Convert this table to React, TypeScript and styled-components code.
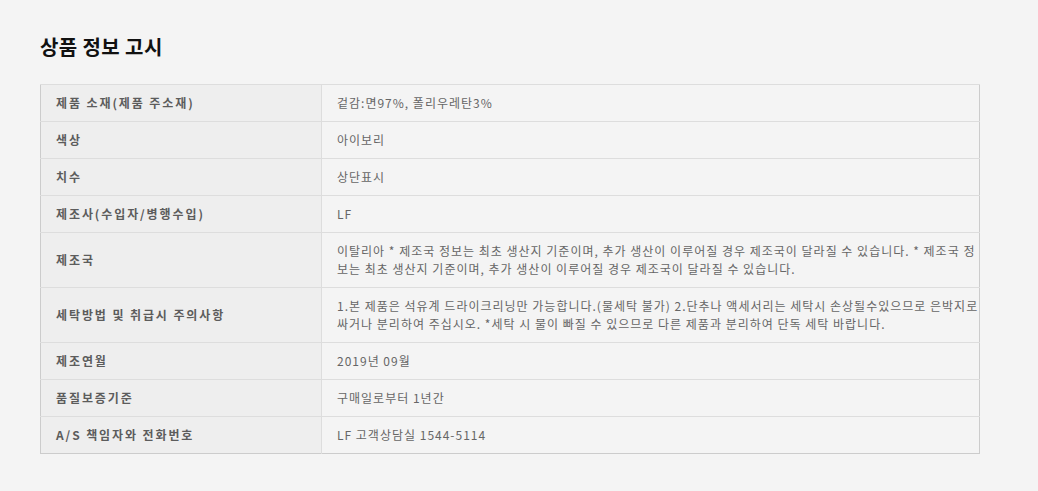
import React from "react";
import styled, { createGlobalStyle } from "styled-components";

const GlobalStyle = createGlobalStyle`
  html, body {
    margin: 0;
    padding: 0;
    background: #f4f4f4;
  }
  body {
    font-family: "Noto Sans CJK KR", "Noto Sans", sans-serif;
  }
`;

const Page = styled.main`
  padding: 33px 58px 37px 40px;
  background: #f4f4f4;
  min-height: 491px;
  box-sizing: border-box;
`;

const Title = styled.h2`
  margin: 0 0 23px;
  font-size: 20px;
  line-height: 28px;
  font-weight: 700;
  color: #111;
  letter-spacing: 0.4px;
`;

const Table = styled.table`
  width: 940px;
  border-collapse: collapse;
  border: 1px solid #cccccc;
  table-layout: fixed;
`;

const Row = styled.tr`
  border-top: 1px solid #dddddd;
`;

const Label = styled.th`
  width: 281px;
  box-sizing: border-box;
  padding: 9px 15px 9px 15px;
  background: #eeeeee;
  border-right: 1px solid #dddddd;
  text-align: left;
  vertical-align: middle;
  font-size: 12px;
  line-height: 18px;
  font-weight: 700;
  color: #5c5c5c;
  letter-spacing: 1.9px;
`;

const Value = styled.td`
  padding: 9px 0 9px 15px;
  background: #f4f4f4;
  vertical-align: middle;
  font-size: 12px;
  line-height: 18px;
  color: #666666;
  word-break: break-all;
  letter-spacing: 1px;
`;

const rows: [string, string][] = [
  ["제품 소재(제품 주소재)", "겉감:면97%, 폴리우레탄3%"],
  ["색상", "아이보리"],
  ["치수", "상단표시"],
  ["제조사(수입자/병행수입)", "LF"],
  [
    "제조국",
    "이탈리아 * 제조국 정보는 최초 생산지 기준이며, 추가 생산이 이루어질 경우 제조국이 달라질 수 있습니다. * 제조국 정보는 최초 생산지 기준이며, 추가 생산이 이루어질 경우 제조국이 달라질 수 있습니다.",
  ],
  [
    "세탁방법 및 취급시 주의사항",
    "1.본 제품은 석유계 드라이크리닝만 가능합니다.(물세탁 불가) 2.단추나 액세서리는 세탁시 손상될수있으므로 은박지로 싸거나 분리하여 주십시오. *세탁 시 물이 빠질 수 있으므로 다른 제품과 분리하여 단독 세탁 바랍니다.",
  ],
  ["제조연월", "2019년 09월"],
  ["품질보증기준", "구매일로부터 1년간"],
  ["A/S 책임자와 전화번호", "LF 고객상담실 1544-5114"],
];

export default function App() {
  return (
    <>
      <GlobalStyle />
      <Page>
        <Title>상품 정보 고시</Title>
        <Table>
          <tbody>
            {rows.map(([k, v]) => (
              <Row key={k}>
                <Label scope="row">{k}</Label>
                <Value>{v}</Value>
              </Row>
            ))}
          </tbody>
        </Table>
      </Page>
    </>
  );
}
